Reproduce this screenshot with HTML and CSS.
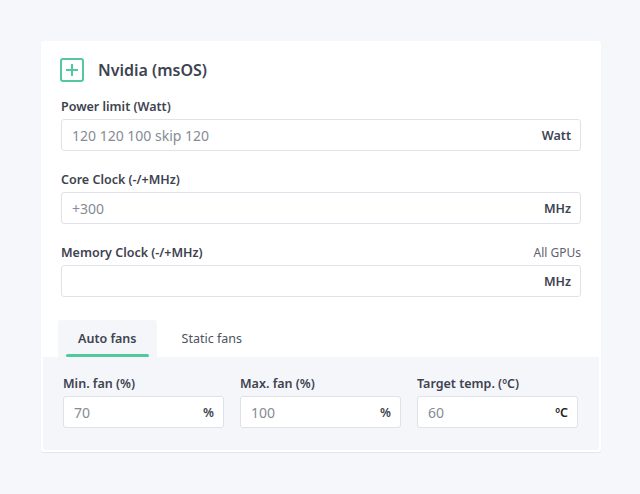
FILE: index.html
```html
<!DOCTYPE html>
<html>
<head>
<meta charset="utf-8">
<link rel="stylesheet" href="styles.css">
</head>
<body>
<div class="card">
  <div class="header">
    <span class="icon"><svg width="14" height="14" viewBox="0 0 14 14"><path d="M7 1v12M1 7h12" stroke="#52c89d" stroke-width="2" fill="none"/></svg></span>
    <h2 class="title">Nvidia (msOS)</h2>
  </div>

  <div class="field">
    <div class="label-row"><label class="label">Power limit (Watt)</label></div>
    <div class="input"><span class="ph">120 120 100 skip 120</span><span class="suffix">Watt</span></div>
  </div>

  <div class="field">
    <div class="label-row"><label class="label">Core Clock (-/+MHz)</label></div>
    <div class="input"><span class="ph">+300</span><span class="suffix">MHz</span></div>
  </div>

  <div class="field">
    <div class="label-row"><label class="label">Memory Clock (-/+MHz)</label><span class="hint">All GPUs</span></div>
    <div class="input"><span class="ph"></span><span class="suffix">MHz</span></div>
  </div>

  <div class="tabs">
    <div class="tab active">Auto fans</div>
    <div class="tab">Static fans</div>
  </div>

  <div class="panel">
    <div class="fan-field">
      <label class="label">Min. fan (%)</label>
      <div class="input small"><span class="ph">70</span><span class="suffix">%</span></div>
    </div>
    <div class="fan-field">
      <label class="label">Max. fan (%)</label>
      <div class="input small"><span class="ph">100</span><span class="suffix">%</span></div>
    </div>
    <div class="fan-field">
      <label class="label">Target temp. (ºC)</label>
      <div class="input small"><span class="ph">60</span><span class="suffix dark">ºC</span></div>
    </div>
  </div>
</div>
</body>
</html>
```
FILE: styles.css
```css
* { box-sizing: border-box; }
html, body { margin: 0; padding: 0; }
body {
  background: #f6f7fb;
  font-family: "Noto Sans", "Open Sans", sans-serif;
  color: #3d4351;
  padding: 41px 0 0 41px;
  width: 640px;
  height: 494px;
}
.card {
  width: 560px;
  background: #fff;
  border-radius: 3px;
  padding: 17px 20px 2px;
  box-shadow: 0 1px 1px rgba(40, 50, 80, 0.09);
}
.header {
  display: flex;
  align-items: center;
  height: 24px;
}
.icon {
  width: 24px;
  height: 24px;
  border: 2px solid #52c89d;
  border-radius: 3px;
  display: flex;
  align-items: center;
  justify-content: center;
  margin-left: -1px;
}
.title {
  margin: 0 0 0 14px;
  font-size: 16px;
  font-weight: 600;
  line-height: 24px;
  color: #3d4351;
}
.field { margin-top: 16px; }
.field + .field { margin-top: 20px; }
.label-row {
  display: flex;
  justify-content: space-between;
  align-items: center;
  height: 18px;
  margin-bottom: 3px;
}
.label {
  font-size: 12.5px;
  font-weight: 600;
  line-height: 18px;
  color: #3d4351;
  display: block;
}
.hint {
  font-size: 12px;
  color: #5d6270;
  line-height: 18px;
}
.input {
  height: 32px;
  border: 1px solid #dfe2ea;
  border-radius: 3px;
  background: #fff;
  display: flex;
  align-items: center;
  justify-content: space-between;
  padding: 0 9px 0 10px;
}
.ph {
  font-size: 14px;
  color: #868b96;
}
.suffix {
  font-size: 12.5px;
  font-weight: 600;
  color: #3d4351;
}
.suffix.dark { color: #222; }
.tabs {
  display: flex;
  margin: 23px 0 0 -3px;
  gap: 5px;
}
.tab {
  height: 37px;
  padding: 0 20px;
  font-size: 12.5px;
  line-height: 37px;
  color: #4d5260;
  position: relative;
  border-radius: 3px 3px 0 0;
}
.tab.active {
  background: #f5f6fa;
  font-weight: 600;
  color: #3d4351;
}
.tab.active::after {
  content: "";
  position: absolute;
  left: 8px;
  right: 8px;
  bottom: 0;
  height: 3px;
  border-radius: 2px;
  background: #52c89d;
}
.panel {
  margin: 0 -18px;
  background: #f5f6fa;
  border-radius: 0 0 3px 3px;
  padding: 18px 21px 22px 20px;
  display: grid;
  grid-template-columns: repeat(3, 1fr);
  gap: 16px;
}
.fan-field .label { margin-bottom: 3px; }
```
